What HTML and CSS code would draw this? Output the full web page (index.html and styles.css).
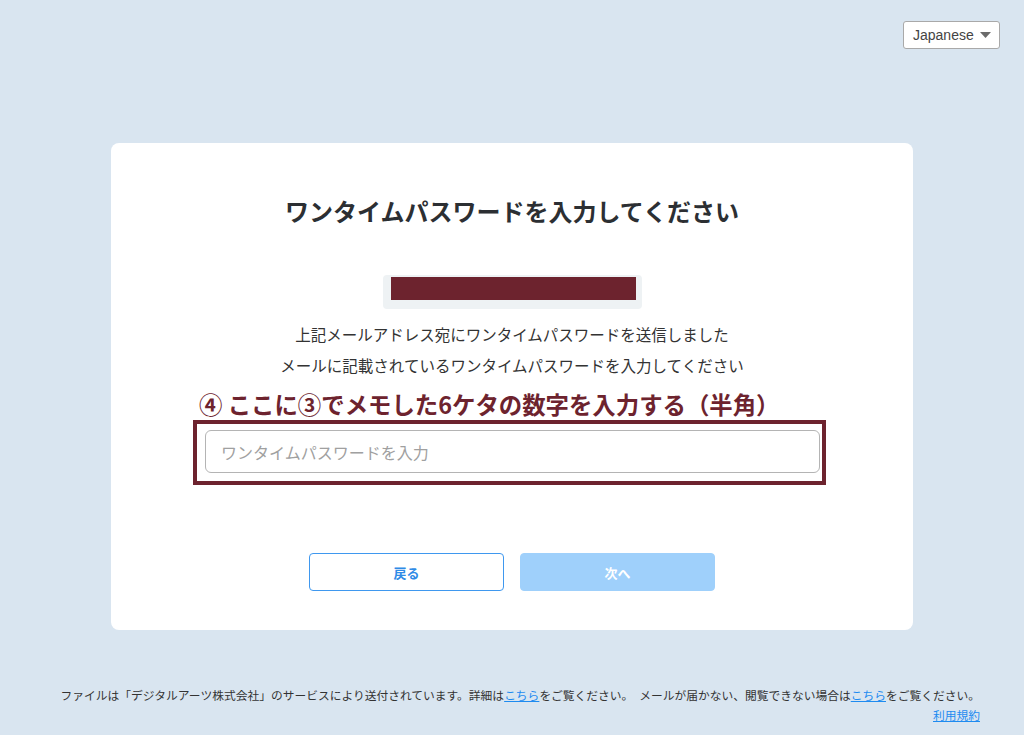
FILE: index.html
```html
<!DOCTYPE html>
<html lang="ja">
<head>
<meta charset="utf-8">
<title>ワンタイムパスワード</title>
<link rel="stylesheet" href="styles.css">
</head>
<body>
<header class="topbar">
  <div class="lang-select">
    <span class="lang-label">Japanese</span>
    <svg class="lang-caret" width="11" height="6" viewBox="0 0 11 6"><path d="M0 0h11L5.5 6z" fill="#6b6b6b"/></svg>
  </div>
</header>
<main class="card">
  <h1 class="title">ワンタイムパスワードを入力してください</h1>
  <div class="mail-box"><div class="mail-redact"></div></div>
  <p class="desc">上記メールアドレス宛にワンタイムパスワードを送信しました</p>
  <p class="desc">メールに記載されているワンタイムパスワードを入力してください</p>
  <div class="note-wrap">
    <div class="note">④ ここに③でメモした6ケタの数字を入力する（半角）</div>
    <div class="note-frame">
      <input class="otp-input" type="text" placeholder="ワンタイムパスワードを入力">
    </div>
  </div>
  <div class="actions">
    <button class="btn btn-back">戻る</button>
    <button class="btn btn-next">次へ</button>
  </div>
</main>
<footer class="footer">
  <p class="footer-line">ファイルは「デジタルアーツ株式会社」のサービスにより送付されています。詳細は<a href="#">こちら</a>をご覧ください。　メールが届かない、閲覧できない場合は<a href="#">こちら</a>をご覧ください。</p>
  <p class="footer-line"><a href="#">利用規約</a></p>
</footer>
</body>
</html>
```

FILE: styles.css
```css
* { box-sizing: border-box; }
html, body { margin: 0; padding: 0; }
body {
  background: #d9e5f0;
  font-family: "Noto Sans CJK JP", "Noto Sans", "Liberation Sans", sans-serif;
  color: #333;
  width: 1024px;
  height: 735px;
  overflow: hidden;
}
.topbar {
  display: flex;
  justify-content: flex-end;
  padding: 21px 24px 0 0;
}
.lang-select {
  width: 97px;
  height: 28px;
  background: #fff;
  border: 1px solid #a9a9a9;
  border-radius: 3px;
  display: flex;
  align-items: center;
  justify-content: space-between;
  padding: 0 8px 0 9px;
}
.lang-label {
  font-family: "Liberation Sans", "Noto Sans", sans-serif;
  font-size: 14px;
  color: #444;
}
.card {
  width: 802px;
  margin: 94px auto 0;
  background: #fff;
  border-radius: 8px;
  padding: 50px 0 39px;
  display: flex;
  flex-direction: column;
  align-items: center;
}
.title {
  margin: 0;
  font-size: 24px;
  line-height: 36px;
  font-weight: 700;
  color: #2c2f33;
}
.mail-box {
  margin-top: 46px;
  width: 259px;
  height: 34px;
  background: #eef2f4;
  border-radius: 4px;
  padding: 2px 6px 0 8px;
}
.mail-redact {
  width: 245px;
  height: 23px;
  background: #6d232e;
}
.desc {
  margin: 0;
  font-size: 15.5px;
  line-height: 31px;
  color: #333;
}
.mail-box + .desc { margin-top: 10px; }
.note-wrap {
  width: 633px;
  margin: 8px 5px 0 0;
}
.note {
  padding-left: 6px;
  font-size: 23.4px;
  line-height: 30px;
  font-weight: 700;
  color: #6d232e;
  white-space: nowrap;
}
.note-frame {
  margin-top: 1px;
  border: 4px solid #6d232e;
  padding: 6px 2px 8px 8px;
}
.otp-input {
  display: block;
  width: 615px;
  height: 43px;
  border: 1px solid #b4b4b4;
  border-radius: 6px;
  padding: 0 15px;
  font-family: "Noto Sans CJK JP", sans-serif;
  font-size: 16px;
  color: #333;
  outline: none;
}
.otp-input::placeholder { color: #a0a0a0; }
.actions {
  margin-top: 68px;
  display: flex;
  gap: 16px;
}
.btn {
  width: 195px;
  height: 38px;
  border-radius: 4px;
  font-family: "Noto Sans CJK JP", sans-serif;
  font-size: 13px;
  font-weight: 700;
  cursor: pointer;
}
.btn-back {
  background: #fff;
  border: 1px solid #3f98ef;
  color: #2f8be6;
}
.btn-next {
  background: #9fd0fb;
  border: 1px solid #9fd0fb;
  color: #fff;
}
.footer {
  margin-top: 55px;
  padding-right: 44px;
  text-align: right;
}
.footer-line {
  margin: 0;
  font-size: 11.75px;
  line-height: 20px;
  color: #333;
  white-space: nowrap;
}
.footer a { color: #1e8bf0; text-decoration: underline; }
```
